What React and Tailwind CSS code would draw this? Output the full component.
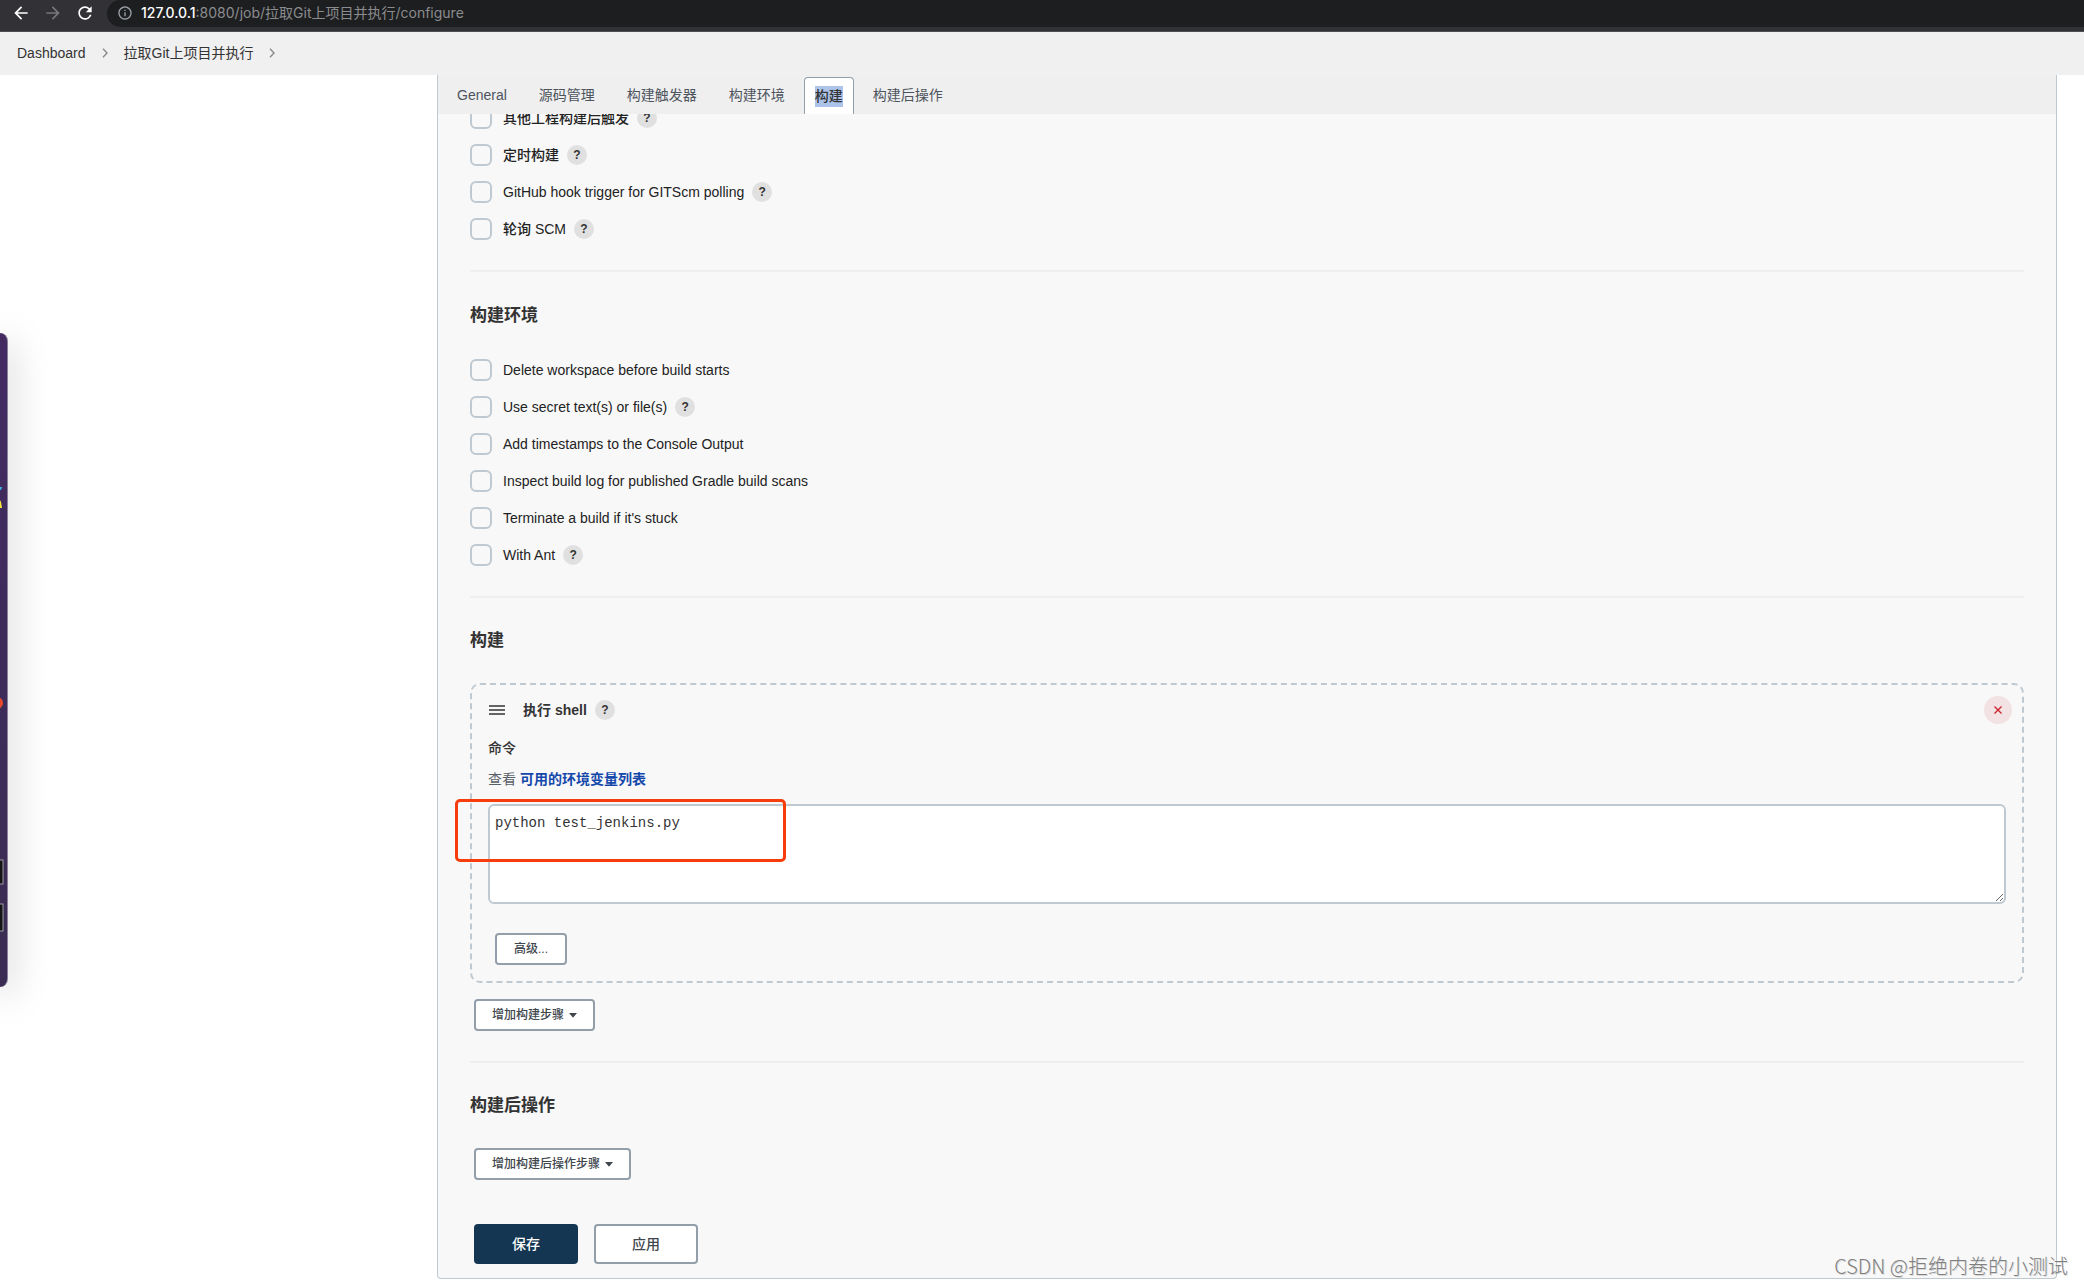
import { useState } from "react";
import { MdArrowBack, MdArrowForward, MdInfoOutline, MdRefresh } from "react-icons/md";

const tabs = ["General", "源码管理", "构建触发器", "构建环境", "构建", "构建后操作"];

const triggers = [
  { id: "upstream", label: "其他工程构建后触发", help: true },
  { id: "timer", label: "定时构建", help: true },
  { id: "github-hook", label: "GitHub hook trigger for GITScm polling", help: true },
  { id: "poll-scm", label: "轮询 SCM", help: true },
];

const environment = [
  { id: "clean-ws", label: "Delete workspace before build starts" },
  { id: "secrets", label: "Use secret text(s) or file(s)", help: true },
  { id: "timestamps", label: "Add timestamps to the Console Output" },
  { id: "gradle-scans", label: "Inspect build log for published Gradle build scans" },
  { id: "timeout", label: "Terminate a build if it's stuck" },
  { id: "ant", label: "With Ant", help: true },
];

function BrowserBar() {
  return (
    <div className="h-8 bg-[#313136] border-b border-[#4d4e52] flex items-start font-['Inter','Noto_Sans_CJK_SC',sans-serif]">
      <div className="h-[26px] w-[107px] shrink-0 flex items-center gap-3 pl-[11px] text-white">
        <button type="button" aria-label="Back"><MdArrowBack size={20} /></button>
        <button type="button" aria-label="Forward" className="text-[#77787b]"><MdArrowForward size={20} /></button>
        <button type="button" aria-label="Reload"><MdRefresh size={20} /></button>
      </div>
      <div className="h-[27px] flex-1 bg-[#1d1e20] rounded-l-full flex items-center pl-[10px] pb-px gap-2 text-sm leading-5 text-[#8b8c8f]">
        <MdInfoOutline size={16} className="text-[#9aa0a6]" />
        <span>
          <span className="text-white font-medium">127.0.0.1</span>:8080/job/拉取Git上项目并执行/configure
        </span>
      </div>
    </div>
  );
}

function Chevron() {
  return (
    <svg width="6" height="10" viewBox="0 0 6 10" fill="none" stroke="#8a8a8a" strokeWidth="1.4">
      <path d="M1 0.8 L5 5 L1 9.2" />
    </svg>
  );
}

function Breadcrumbs() {
  return (
    <nav className="h-[43px] bg-[#f0f0f0] flex items-center gap-4 pl-[17px] pb-px text-sm text-[#333]">
      <a href="#dashboard">Dashboard</a>
      <Chevron />
      <a href="#job">拉取Git上项目并执行</a>
      <Chevron />
    </nav>
  );
}

function Help() {
  return (
    <button
      type="button"
      aria-label="Help"
      className="w-5 h-5 shrink-0 rounded-full bg-[#e0e0e0] text-xs leading-5 font-bold text-[#333]"
    >
      ?
    </button>
  );
}

function Option({ id, label, help }) {
  return (
    <div className="h-[22px] flex items-center">
      <input
        id={id}
        type="checkbox"
        className="appearance-none w-[22px] h-[22px] shrink-0 border-2 border-[#bfc9d1] rounded-md bg-[#f8f8f8] checked:bg-[#0b6aa2]"
      />
      <label htmlFor={id} className="ml-[11px] mr-2 text-sm leading-5 font-medium text-[#222]">{label}</label>
      {help && <Help />}
    </div>
  );
}

function Divider() {
  return <hr className="border-0 h-[2px] bg-[#efefef]" />;
}

function SectionTitle({ children }) {
  return <h2 className="text-[17px] leading-6 font-bold">{children}</h2>;
}

function StepButton({ children }) {
  return (
    <button
      type="button"
      className="h-8 w-fit ml-1 px-4 border-2 border-[#929eaa] rounded-sm bg-white text-xs font-medium text-[#40464d] flex items-center gap-[5px]"
    >
      {children}
      <svg width="8" height="5" viewBox="0 0 8 5" fill="#40464d">
        <path d="M0 0 H8 L4.4 4.2 Q4 4.6 3.6 4.2 Z" />
      </svg>
    </button>
  );
}

function ShellStep() {
  const [command, setCommand] = useState("python test_jenkins.py");

  return (
    <div className="relative border-2 border-dashed border-[#bfc9d1] rounded-[10px] px-4 pt-[9px] pb-4">
      <div className="h-8 flex items-center">
        <svg width="17" height="10" viewBox="0 0 17 10" stroke="#333" strokeWidth="1.5">
          <path d="M1 1 H17 M1 5 H17 M1 9 H17" />
        </svg>
        <h3 className="ml-[18px] mr-2 text-sm leading-5 font-bold">执行 shell</h3>
        <Help />
        <button
          type="button"
          aria-label="Delete"
          className="ml-auto -mr-[6px] w-7 h-7 rounded-full bg-[#f3e2e4] flex items-center justify-center"
        >
          <svg width="8" height="8" viewBox="0 0 8 8" stroke="#cc1f2b" strokeWidth="1.3">
            <path d="M0.5 0.5 L7.5 7.5 M7.5 0.5 L0.5 7.5" />
          </svg>
        </button>
      </div>

      <label htmlFor="command" className="block mt-3 text-sm leading-5 font-medium">命令</label>
      <p className="mt-[11px] text-sm leading-5 text-[#5b6067]">
        查看 <a href="#env-vars" className="font-bold text-[#1548ab]">可用的环境变量列表</a>
      </p>
      <textarea
        id="command"
        value={command}
        onChange={(e) => setCommand(e.target.value)}
        spellCheck={false}
        className="block mt-[15px] w-full h-[100px] border-2 border-[#bfc9d1] rounded-md bg-white px-[5px] py-[7px] font-['Liberation_Mono',monospace] text-sm leading-5 text-[#333] outline-none resize-y"
      />
      <button
        type="button"
        className="mt-[29px] ml-[7px] h-8 w-[72px] block border-2 border-[#929eaa] rounded-sm bg-white text-xs font-medium text-[#40464d]"
      >
        高级...
      </button>

      {/* Callout around the command */}
      <div className="absolute -left-[17px] top-[114px] w-[331px] h-[63px] border-3 border-[#f63d0b] rounded-[5px] pointer-events-none" />
    </div>
  );
}

// Edge of another window that sits over the page
function WindowEdge() {
  return (
    <div className="absolute left-0 top-[333px] w-2 h-[654px] rounded-r-lg bg-linear-to-b from-[#432b62] to-[#3a2c52] border-r border-[#8a809a] shadow-[0_8px_36px_rgba(0,0,0,0.4)]">
      <svg width="7" height="654" viewBox="0 0 7 654">
        <path d="M0 154 H2 L1 157 H0 Z" fill="#35b5e8" />
        <path d="M0 167 L1 169 L2 175 H0 Z" fill="#f3e53a" />
        <circle cx="-3" cy="370" r="6" fill="#e84a2b" />
        <rect x="-8" y="527" width="11" height="24" fill="#141414" stroke="#9b9ba5" />
        <rect x="-8" y="571" width="11" height="27" fill="#141414" stroke="#9b9ba5" />
      </svg>
    </div>
  );
}

export default function App() {
  return (
    <div className="relative min-h-screen overflow-hidden bg-white text-[#333] font-['Liberation_Sans','Noto_Sans_CJK_SC',sans-serif]">
      <BrowserBar />
      <Breadcrumbs />

      <main className="ml-[437px] mr-[27px] mb-[6px] bg-[#f8f8f8] border border-t-0 border-[#bfc9d1] rounded-b">
        <div className="relative z-10 h-[39px] bg-[#efefef] flex items-end pl-[3px] text-sm text-[#4d545d]">
          {tabs.map((tab) =>
            tab === "构建" ? (
              <button
                key={tab}
                type="button"
                className="h-[37px] mx-[3px] px-[10px] border border-b-0 border-[#929eaa] rounded-t bg-white font-medium text-[#333]"
              >
                <span className="block leading-[21px] bg-[#adc3ea]">{tab}</span>
              </button>
            ) : (
              <button key={tab} type="button" className="h-[37px] px-4 pb-px">{tab}</button>
            )
          )}
        </div>

        <form className="-mt-[7px] px-8 pb-[14px]" onSubmit={(e) => e.preventDefault()}>
          <div className="flex flex-col gap-[15px] mb-[30px]">
            {triggers.map((item) => <Option key={item.id} {...item} />)}
          </div>
          <Divider />

          <div className="mt-8 mb-[30px]">
            <SectionTitle>构建环境</SectionTitle>
            <div className="mt-[31px] flex flex-col gap-[15px]">
              {environment.map((item) => <Option key={item.id} {...item} />)}
            </div>
          </div>
          <Divider />

          <div className="mt-[31px] mb-[30px]">
            <SectionTitle>构建</SectionTitle>
            <div className="mt-[30px] mb-4">
              <ShellStep />
            </div>
            <StepButton>增加构建步骤</StepButton>
          </div>
          <Divider />

          <div className="mt-[31px]">
            <SectionTitle>构建后操作</SectionTitle>
            <div className="mt-[30px]">
              <StepButton>增加构建后操作步骤</StepButton>
            </div>
          </div>

          <div className="mt-11 ml-1 flex gap-4 text-sm font-medium">
            <button type="submit" className="w-[104px] h-10 rounded-sm bg-[#143653] text-white">保存</button>
            <button type="button" className="w-[104px] h-10 rounded-sm border-2 border-[#929eaa] bg-white text-[#40464d]">应用</button>
          </div>
        </form>
      </main>

      <WindowEdge />
      <div className="absolute right-4 bottom-[7px] font-['Noto_Sans_CJK_SC',sans-serif] text-xl leading-6 font-light text-[#808080] [text-shadow:1px_1px_0_rgba(0,0,0,0.15)]">
        CSDN @拒绝内卷的小测试
      </div>
    </div>
  );
}
